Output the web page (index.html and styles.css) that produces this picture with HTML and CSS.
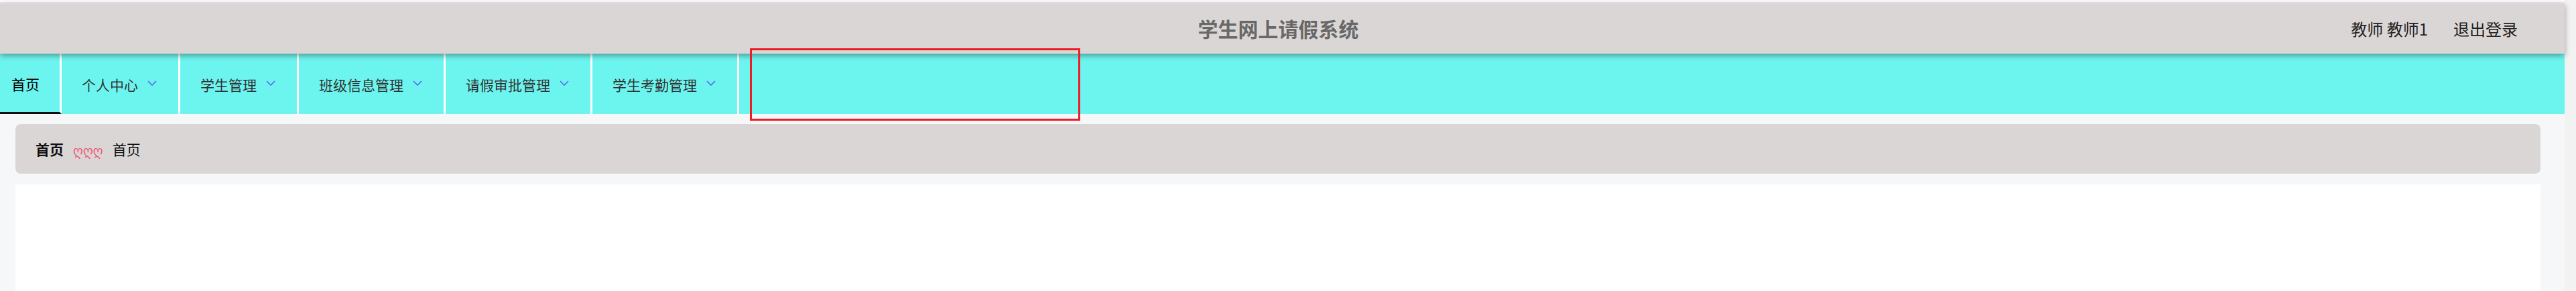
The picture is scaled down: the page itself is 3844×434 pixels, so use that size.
FILE: index.html
```html
<!DOCTYPE html>
<html lang="zh-CN">
<head>
<meta charset="utf-8">
<title>学生网上请假系统</title>
<link rel="stylesheet" href="styles.css">
</head>
<body>
<div class="app">
  <div class="topline"></div>
  <header class="header">
    <div class="header-side"></div>
    <h1 class="title">学生网上请假系统</h1>
    <div class="header-side user">
      <span class="user-name">教师 教师1</span>
      <a class="logout">退出登录</a>
    </div>
  </header>
  <nav class="nav">
    <div class="nav-item active">首页</div>
    <div class="nav-item">个人中心<svg class="caret" viewBox="0 0 14 8"><path d="M1 1 L7 7 L13 1"/></svg></div>
    <div class="nav-item">学生管理<svg class="caret" viewBox="0 0 14 8"><path d="M1 1 L7 7 L13 1"/></svg></div>
    <div class="nav-item">班级信息管理<svg class="caret" viewBox="0 0 14 8"><path d="M1 1 L7 7 L13 1"/></svg></div>
    <div class="nav-item">请假审批管理<svg class="caret" viewBox="0 0 14 8"><path d="M1 1 L7 7 L13 1"/></svg></div>
    <div class="nav-item">学生考勤管理<svg class="caret" viewBox="0 0 14 8"><path d="M1 1 L7 7 L13 1"/></svg></div>
  </nav>
  <main class="main">
    <div class="breadcrumb">
      <span class="crumb-strong">首页</span>
      <span class="crumb-sep">ღღღ</span>
      <span class="crumb">首页</span>
    </div>
    <div class="content"></div>
  </main>
  <div class="highlight"></div>
</div>
</body>
</html>
```

FILE: styles.css
```css
html, body {
  margin: 0;
  padding: 0;
}
body {
  background: #f2f2f2;
  font-family: "Noto Sans CJK SC", "Noto Sans", sans-serif;
  overflow: hidden;
}
.app {
  position: relative;
  margin-right: 17px;
  background: #fbfafc;
  height: 434px;
  display: flex;
  flex-direction: column;
}
.topline {
  height: 1px;
  margin: 3px 0 1px;
  background: #ebe4f3;
}
.header {
  position: relative;
  z-index: 2;
  height: 75px;
  background: #dbd6d6;
  display: grid;
  grid-template-columns: 1fr auto 1fr;
  align-items: center;
  box-shadow: 0 3px 8px rgba(40, 40, 40, 0.45);
}
.title {
  margin: 0 12px 2px 0;
  font-size: 30px;
  font-weight: bold;
  color: #686868;
  line-height: 1;
}
.user {
  display: flex;
  justify-content: flex-end;
  align-items: center;
  padding-right: 70px;
  font-size: 24px;
  color: #222;
  line-height: 1;
}
.logout {
  margin-left: 38px;
  color: #222;
}
.nav {
  position: relative;
  z-index: 1;
  height: 90px;
  background: #6cf5ef;
  display: flex;
}
.nav-item {
  box-sizing: border-box;
  height: 100%;
  display: flex;
  align-items: center;
  padding: 2px 32px 0 30px;
  border-right: 3px solid #ffffff;
  font-size: 21px;
  color: #333;
}
.nav-item.active {
  padding: 2px 30px 0 17px;
  border-bottom: 3px solid #111;
  color: #000;
}
.caret {
  width: 14px;
  height: 8px;
  margin-left: 14px;
  margin-top: -5px;
  fill: none;
  stroke: #5a66f0;
  stroke-width: 1.6;
}
.main {
  flex: 1;
  background: #f6f7f9;
  padding: 15px 36px 0 23px;
  display: flex;
  flex-direction: column;
}
.breadcrumb {
  height: 74px;
  box-sizing: border-box;
  background: #dbd6d6;
  border-radius: 8px;
  display: flex;
  align-items: center;
  padding-left: 30px;
  font-size: 21px;
  color: #222;
}
.crumb-strong {
  font-weight: bold;
  color: #111;
}
.crumb-sep {
  margin: 6px 14px 0 14px;
  color: #ef5a78;
  font-family: "DejaVu Sans", sans-serif;
  font-size: 19px;
}
.crumb {
  color: #111;
}
.content {
  flex: 1;
  margin-top: 16px;
  background: #ffffff;
}
.highlight {
  position: absolute;
  left: 1119px;
  top: 72px;
  width: 493px;
  height: 108px;
  box-sizing: border-box;
  border: 3px solid #ee1c25;
  z-index: 3;
}
```
